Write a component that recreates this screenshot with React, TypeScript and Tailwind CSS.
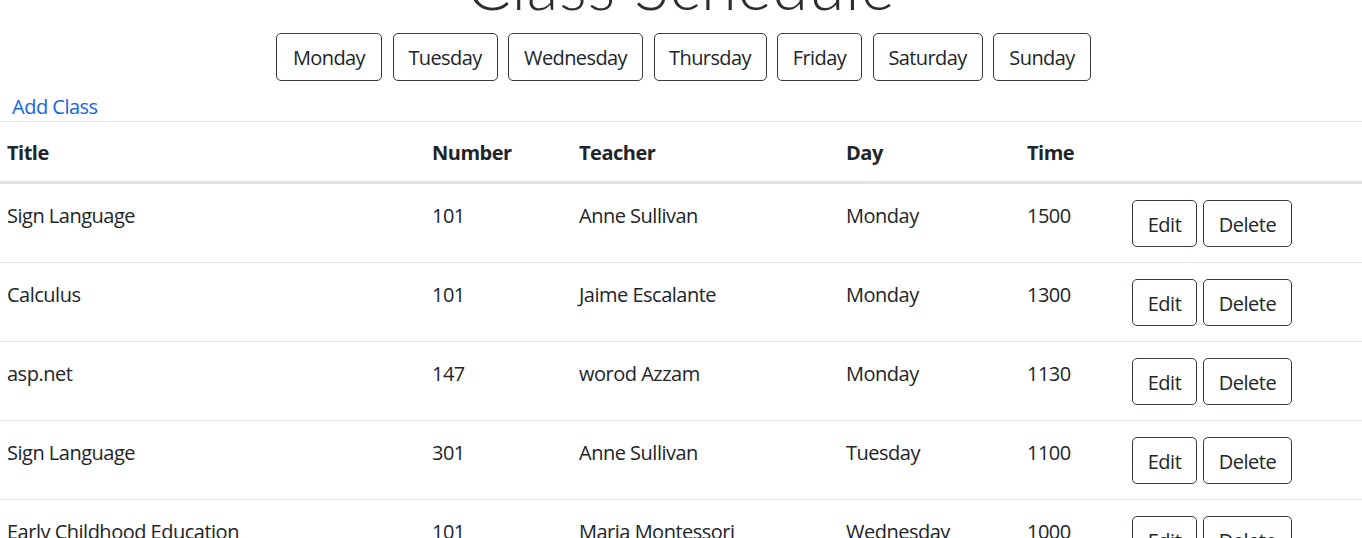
const days = [
    { name: "Monday", w: "w-[106px]" },
    { name: "Tuesday", w: "w-[105px]" },
    { name: "Wednesday", w: "w-[135px]" },
    { name: "Thursday", w: "w-[113px]" },
    { name: "Friday", w: "w-[85px]" },
    { name: "Saturday", w: "w-[110px]" },
    { name: "Sunday", w: "w-[98px]" },
];

const classes = [
    { title: "Sign Language", number: "101", teacher: "Anne Sullivan", day: "Monday", time: "1500" },
    { title: "Calculus", number: "101", teacher: "Jaime Escalante", day: "Monday", time: "1300" },
    { title: "asp.net", number: "147", teacher: "worod Azzam", day: "Monday", time: "1130" },
    { title: "Sign Language", number: "301", teacher: "Anne Sullivan", day: "Tuesday", time: "1100" },
    { title: "Early Childhood Education", number: "101", teacher: "Maria Montessori", day: "Wednesday", time: "1000" },
];

const cols = "grid grid-cols-[426px_147px_267px_181px_105px_1fr]";

function App() {
    return (
        <div className="h-[538px] overflow-hidden bg-white text-[#212529] text-[20px] font-['Open_Sans','Noto_Sans',sans-serif]">
            <h1 className="text-center text-[65px] leading-[65px] font-light tracking-[0.8px] mt-[-47px] h-[65px] font-['Lato','Open_Sans',sans-serif] text-[#2b2d30]">
                Class Schedule
            </h1>
            <div className="flex justify-center gap-[10.5px] mt-[15px] pl-[5px]">
                {days.map((d) => (
                    <button
                        key={d.name}
                        className={`${d.w} h-[48px] border border-[#343a40] rounded-[5px] leading-[30px] tracking-[-0.6px] pt-[1px]`}
                    >
                        {d.name}
                    </button>
                ))}
            </div>
            <div className="h-[40px] pl-[12px] pt-[11px]">
                <a href="#" className="text-[#1565e0] leading-[30px] tracking-[-0.5px]">
                    Add Class
                </a>
            </div>
            <div className="border-t border-[#dee2e6]">
                <div className={`${cols} h-[62px] pt-[16px] font-bold leading-[30px] border-b-[3px] border-[#dee2e6] tracking-[-0.5px]`}>
                    <div className="pl-[7px]">Title</div>
                    <div className="pl-[6px]">Number</div>
                    <div className="pl-[6px]">Teacher</div>
                    <div className="pl-[6px]">Day</div>
                    <div className="pl-[6px]">Time</div>
                    <div />
                </div>
                {classes.map((c, i) => (
                    <div
                        key={i}
                        className={`${cols} h-[79px] pt-[17px] leading-[30px] tracking-[-0.5px] border-b border-[#dee2e6]`}
                    >
                        <div className="pl-[7px]">{c.title}</div>
                        <div className="pl-[6px]">{c.number}</div>
                        <div className="pl-[6px]">{c.teacher}</div>
                        <div className="pl-[6px]">{c.day}</div>
                        <div className="pl-[6px]">{c.time}</div>
                        <div className="pl-[6px] -mt-[1px] flex gap-[6px] items-start">
                            <button className="h-[47px] w-[65px] border border-[#343a40] rounded-[5px] pt-[2px]">Edit</button>
                            <button className="h-[47px] w-[89px] border border-[#343a40] rounded-[5px] pt-[2px]">Delete</button>
                        </div>
                    </div>
                ))}
            </div>
        </div>
    );
}

export default App;
